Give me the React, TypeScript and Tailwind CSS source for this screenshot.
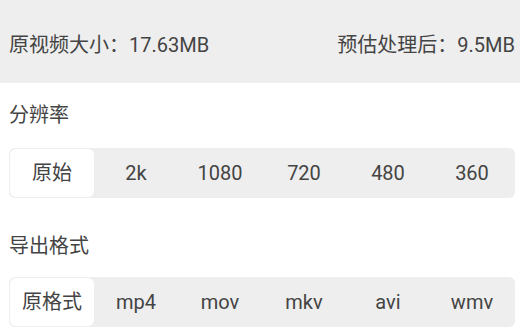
import React, { useState } from "react";

const font = { fontFamily: 'Roboto, "Noto Sans CJK SC", sans-serif' };

const resolutions = ["原始", "2k", "1080", "720", "480", "360"];
const formats = ["原格式", "mp4", "mov", "mkv", "avi", "wmv"];

const Segmented = ({
  items,
  value,
  onChange,
}: {
  items: string[];
  value: number;
  onChange: (i: number) => void;
}) => (
  <div className="ml-[9px] mr-[5px] h-[50px] rounded-[6px] bg-[#eeeeee] p-[1px] flex">
    {items.map((item, idx) => (
      <button
        key={item}
        onClick={() => onChange(idx)}
        className={`flex-1 flex items-center justify-center rounded-[6px] text-[20px] text-[#444444] ${
          idx === value ? "bg-white" : ""
        }`}
      >
        {item}
      </button>
    ))}
  </div>
);

export default function App() {
  const [res, setRes] = useState(0);
  const [fmt, setFmt] = useState(0);

  return (
    <div className="w-[520px] h-[331px] bg-white overflow-hidden" style={font}>
      {/* Size summary */}
      <div className="h-[83px] bg-[#eeeeee] flex items-center justify-between pl-[9px] pr-[5px] text-[20px] text-[#444444] pt-[6px]">
        <span>原视频大小：17.63MB</span>
        <span>预估处理后：9.5MB</span>
      </div>

      {/* Resolution */}
      <div className="mt-[20px] h-[24px] leading-[24px] pl-[9px] text-[20px] text-[#444444]">
        分辨率
      </div>
      <div className="mt-[21px]">
        <Segmented items={resolutions} value={res} onChange={setRes} />
      </div>

      {/* Output format */}
      <div className="mt-[36px] h-[24px] leading-[24px] pl-[9px] text-[20px] text-[#444444]">
        导出格式
      </div>
      <div className="mt-[19px]">
        <Segmented items={formats} value={fmt} onChange={setFmt} />
      </div>
    </div>
  );
}
